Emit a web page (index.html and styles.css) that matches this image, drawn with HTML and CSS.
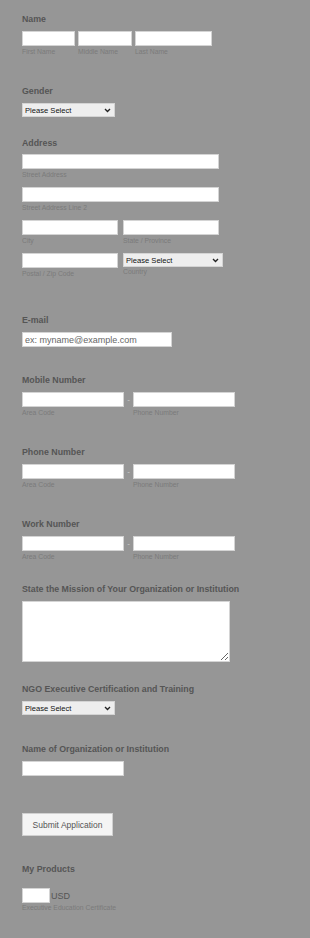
FILE: index.html
```html
<!DOCTYPE html>
<html lang="en">
<head>
    <meta charset="UTF-8">
    <meta name="viewport" content="width=device-width, initial-scale=1.0">
    <title>NGO Application</title>
    <link rel="stylesheet" href="styles.css">
</head>
<body>
    <form class="form">
        <!-- name -->
        <div class="field f-name">
            <label class="label">Name</label>
            <div class="row">
                <div class="sub"><input type="text" class="w53"><span>First Name</span></div>
                <div class="sub"><input type="text" class="w54"><span>Middle Name</span></div>
                <div class="sub"><input type="text" class="w77"><span>Last Name</span></div>
            </div>
        </div>

        <div class="field f-gender">
            <label class="label">Gender</label>
            <div class="select w93">
                <select><option>Please Select</option></select>
                <svg class="chev" viewBox="0 0 8 6" width="7" height="5"><path d="M1 1.2 L4 4.3 L7 1.2" fill="none" stroke="#222" stroke-width="1.6"/></svg>
            </div>
        </div>

        <!-- address -->
        <div class="field f-address">
            <label class="label">Address</label>
            <div class="sub addr"><input type="text" class="w197"><span>Street Address</span></div>
            <div class="sub addr"><input type="text" class="w197"><span>Street Address Line 2</span></div>
            <div class="row addr wide">
                <div class="sub"><input type="text" class="w96"><span>City</span></div>
                <div class="sub"><input type="text" class="w96"><span>State / Province</span></div>
            </div>
            <div class="row wide">
                <div class="sub"><input type="text" class="w96"><span>Postal / Zip Code</span></div>
                <div class="sub">
                    <div class="select w100">
                        <select><option>Please Select</option></select>
                        <svg class="chev" viewBox="0 0 8 6" width="7" height="5"><path d="M1 1.2 L4 4.3 L7 1.2" fill="none" stroke="#222" stroke-width="1.6"/></svg>
                    </div>
                    <span class="country">Country</span>
                </div>
            </div>
        </div>

        <div class="field f-email">
            <label class="label">E-mail</label>
            <input type="email" class="w150 email" placeholder="ex: myname@example.com">
        </div>

        <!-- phones -->
        <div class="field f-mobile">
            <label class="label">Mobile Number</label>
            <div class="row">
                <div class="sub"><input type="text" class="w102"><span>Area Code</span></div>
                <div class="dash">-</div>
                <div class="sub"><input type="text" class="w102"><span>Phone Number</span></div>
            </div>
        </div>

        <div class="field f-phone">
            <label class="label">Phone Number</label>
            <div class="row">
                <div class="sub"><input type="text" class="w102"><span>Area Code</span></div>
                <div class="dash">-</div>
                <div class="sub"><input type="text" class="w102"><span>Phone Number</span></div>
            </div>
        </div>

        <div class="field f-work">
            <label class="label">Work Number</label>
            <div class="row">
                <div class="sub"><input type="text" class="w102"><span>Area Code</span></div>
                <div class="dash">-</div>
                <div class="sub"><input type="text" class="w102"><span>Phone Number</span></div>
            </div>
        </div>

        <div class="field f-mission">
            <label class="label">State the Mission of Your Organization or Institution</label>
            <textarea></textarea>
        </div>

        <div class="field f-ngo">
            <label class="label">NGO Executive Certification and Training</label>
            <div class="select w93">
                <select><option>Please Select</option></select>
                <svg class="chev" viewBox="0 0 8 6" width="7" height="5"><path d="M1 1.2 L4 4.3 L7 1.2" fill="none" stroke="#222" stroke-width="1.6"/></svg>
            </div>
        </div>

        <div class="field f-org">
            <label class="label">Name of Organization or Institution</label>
            <input type="text" class="w102">
        </div>

        <div class="field f-submit">
            <button type="button" class="btn">Submit Application</button>
        </div>

        <div class="field f-products">
            <label class="label">My Products</label>
            <div class="price"><input type="text" class="w28"><span class="usd">USD</span></div>
            <span class="note">Executive Education Certificate</span>
        </div>
    </form>
</body>
</html>
```
FILE: styles.css
```css
*{
    margin: 0;
    padding: 0;
    box-sizing: border-box;
}
body{
    background-color: #969696;
    font-family: "Liberation Sans", Arial, sans-serif;
    width: 310px;
    height: 938px;
}
.form{
    padding: 14px 0 0 22px;
}
.field{
    display: block;
}
.label{
    display: block;
    font-size: 8.8px;
    line-height: 11px;
    font-weight: bold;
    color: #555;
    margin-bottom: 6px;
}
.f-address .label{ margin-bottom: 5px; }
.f-products .label{ margin-bottom: 13px; }

/* spacing between blocks */
.f-gender{ margin-top: 30px; }
.f-address{ margin-top: 21px; }
.f-email{ margin-top: 37px; }
.f-mobile{ margin-top: 28px; }
.f-phone{ margin-top: 30px; }
.f-work{ margin-top: 30px; }
.f-mission{ margin-top: 23px; }
.f-ngo{ margin-top: 22px; }
.f-org{ margin-top: 29px; }
.f-submit{ margin-top: 37px; }
.f-products{ margin-top: 28px; }

.row{
    display: flex;
    gap: 3px;
}
.row.wide{ gap: 5px; }
.sub{
    display: flex;
    flex-direction: column;
}
.sub span, .note{
    display: block;
    font-size: 6.8px;
    line-height: 8px;
    margin-top: 2px;
    color: #7b7b7b;
}
.sub .country{ margin-top: 1px; }
.addr{ margin-bottom: 8px; }

input, textarea{
    display: block;
    height: 15px;
    border: 1px solid #d4d4d4;
    background-color: #fff;
    font-family: "Liberation Sans", Arial, sans-serif;
    font-size: 8px;
    padding: 0 3px;
    outline: none;
}
.email{
    font-size: 9px;
    padding: 0 2px;
}
input::placeholder{
    color: #666;
}
/* select with a small chevron drawn on top */
.select{
    position: relative;
    height: 14px;
}
.select select{
    display: block;
    width: 100%;
    height: 14px;
    -webkit-appearance: none;
    appearance: none;
    border: 1px solid #d4d4d4;
    background-color: #eee;
    color: #111;
    font-family: "Liberation Sans", Arial, sans-serif;
    font-size: 7.6px;
    padding: 0 2px;
    border-radius: 0;
    outline: none;
}
.chev{
    position: absolute;
    right: 4px;
    top: 5px;
    pointer-events: none;
}
textarea{
    width: 208px;
    height: 61px;
    resize: both;
}
.dash{
    width: 9px;
    text-align: center;
    font-size: 8px;
    line-height: 15px;
    color: #d0d0d0;
    margin-left: -3px;
    margin-right: -3px;
}
.w28{ width: 28px; }
.w53{ width: 53px; }
.w54{ width: 54px; }
.w77{ width: 77px; }
.w93{ width: 93px; }
.w96{ width: 96px; }
.w100{ width: 100px; }
.w102{ width: 102px; }
.w150{ width: 150px; }
.w197{ width: 197px; }

.btn{
    display: block;
    width: 91px;
    height: 23px;
    background-color: #f4f4f4;
    border: 1px solid #d0d0d0;
    color: #555;
    font-family: "Liberation Sans", Arial, sans-serif;
    font-size: 8.5px;
}
.price{
    display: flex;
    align-items: center;
}
.usd{
    font-size: 9px;
    color: #555;
    margin-left: 1px;
}
.note{ margin-top: 1px; }
```
